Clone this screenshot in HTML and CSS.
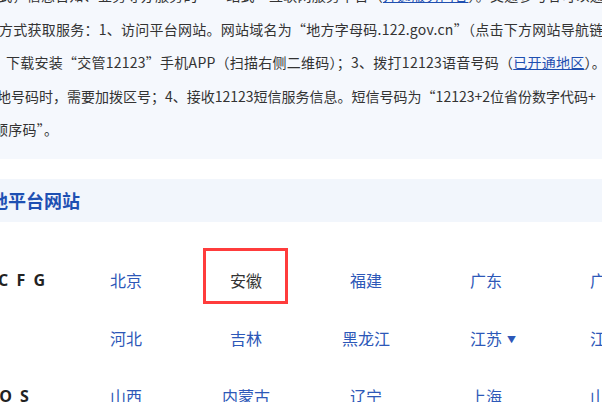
FILE: index.html
```html
<!DOCTYPE html>
<html lang="zh-CN">
<head>
<meta charset="utf-8">
<link rel="stylesheet" href="styles.css">
</head>
<body>
<div class="page">
  <section class="intro">
    <div class="line l1">方式，信息告知、业务导办服务的“一站式”互联网服务平台（<a href="#">开通服务内容</a>）。交通参与者可以通过以下</div>
    <div class="line l2">方式获取服务：1、访问平台网站。网站域名为“地方字母码.122.gov.cn”（点击下方网站导航链</div>
    <div class="line l3">接）；2、下载安装“交管12123”手机APP（扫描右侧二维码）；3、拨打12123语音号码（<a href="#">已开通地区</a>）。</div>
    <div class="line l4">拨打外地号码时，需要加拨区号；4、接收12123短信服务信息。短信号码为“12123+2位省份数字代码+</div>
    <div class="line l5">顺序码”。</div>
  </section>

  <div class="section-head"><h2 class="title">各地平台网站</h2></div>

  <div class="grid">
    <div class="row">
      <div class="letters l-first">A B C F G</div>
      <div class="cell"><a href="#">北京</a></div>
      <div class="cell cell-marked"><span class="plain">安徽</span></div>
      <div class="cell"><a href="#">福建</a></div>
      <div class="cell"><a href="#">广东</a></div>
      <div class="cell"><a href="#">广西</a></div>
    </div>
    <div class="row">
      <div class="letters"></div>
      <div class="cell"><a href="#">河北</a></div>
      <div class="cell"><a href="#">吉林</a></div>
      <div class="cell"><a href="#">黑龙江</a></div>
      <div class="cell"><a href="#" class="drop">江苏<span class="caret">▼</span></a></div>
      <div class="cell"><a href="#">江西</a></div>
    </div>
    <div class="row">
      <div class="letters l-third">N O S</div>
      <div class="cell"><a href="#">山西</a></div>
      <div class="cell"><a href="#">内蒙古</a></div>
      <div class="cell"><a href="#">辽宁</a></div>
      <div class="cell"><a href="#">上海</a></div>
      <div class="cell"><a href="#">山东</a></div>
    </div>
  </div>
</div>
</body>
</html>
```

FILE: styles.css
```css
*, *::before, *::after { box-sizing: border-box; }
html, body {
  margin: 0;
  padding: 0;
  background: #ffffff;
  overflow: hidden;
}
body {
  width: 602px;
  height: 402px;
  font-family: "Noto Sans CJK SC", "Liberation Sans", sans-serif;
}
.page {
  width: 602px;
  height: 402px;
  overflow: hidden;
}
.intro {
  background: #f5f8fd;
  margin-top: -21px;
  padding-bottom: 12px;
  font-size: 14px;
  line-height: 33.5px;
  letter-spacing: 0.25px;
  color: #333333;
  overflow: hidden;
}
.line {
  white-space: nowrap;
}
.line a {
  color: #1f4fb0;
  text-decoration: underline;
}
.l1 { margin-left: -16px; }
.l2 { margin-left: -1px; }
.l3 { margin-left: -52px; }
.l4 { margin-left: -45px; letter-spacing: 0; }
.l5 { margin-left: -6px; }

.section-head {
  margin-top: 20px;
  background: #f2f6fc;
  height: 43px;
  display: flex;
  align-items: center;
  overflow: hidden;
}
.title {
  margin: 0 0 0 -28px;
  font-size: 18px;
  font-weight: bold;
  color: #1e50b3;
  white-space: nowrap;
  line-height: 1;
}

.grid {
  margin-top: 29px;
}
.row {
  display: flex;
  height: 58px;
  align-items: center;
  white-space: nowrap;
}
.letters {
  flex: 0 0 66px;
  font-size: 16px;
  font-weight: bold;
  color: #222222;
  letter-spacing: 2px;
  font-family: "Open Sans", "Liberation Sans", sans-serif;
}
.l-first { margin-left: -40px; flex-basis: 106px; }
.l-third { margin-left: -22px; flex-basis: 88px; }
.cell {
  flex: 0 0 120px;
  text-align: center;
  font-size: 16px;
  position: relative;
}
.cell a {
  color: #2d58b8;
  text-decoration: none;
}
.plain {
  color: #333333;
}
.cell-marked::before {
  content: "";
  position: absolute;
  left: 17px;
  top: -20px;
  width: 85px;
  height: 56px;
  border: 3px solid #ff3c3c;
}
.caret {
  display: inline-block;
  width: 14px;
  margin-right: -14px;
  font-size: 9px;
  text-align: right;
  vertical-align: 2px;
}
```
